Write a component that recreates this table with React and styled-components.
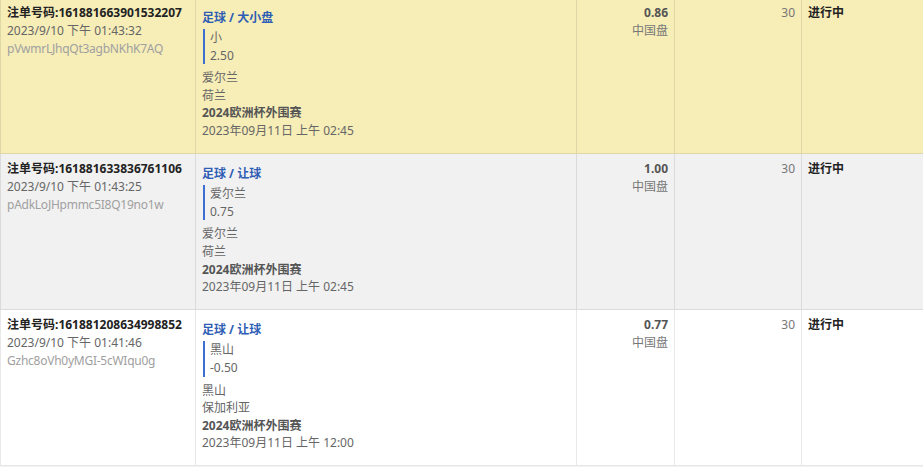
import styled, { createGlobalStyle } from "styled-components";

const bets = [
  {
    id: "161881663901532207",
    placed: "2023/9/10 下午 01:43:32",
    hash: "pVwmrLJhqQt3agbNKhK7AQ",
    market: "足球 / 大小盘",
    pick: "小",
    line: "2.50",
    home: "爱尔兰",
    away: "荷兰",
    league: "2024欧洲杯外围赛",
    kickoff: "2023年09月11日 上午 02:45",
    odds: "0.86",
    oddsType: "中国盘",
    stake: "30",
    status: "进行中",
    tone: "highlight",
  },
  {
    id: "161881633836761106",
    placed: "2023/9/10 下午 01:43:25",
    hash: "pAdkLoJHpmmc5I8Q19no1w",
    market: "足球 / 让球",
    pick: "爱尔兰",
    line: "0.75",
    home: "爱尔兰",
    away: "荷兰",
    league: "2024欧洲杯外围赛",
    kickoff: "2023年09月11日 上午 02:45",
    odds: "1.00",
    oddsType: "中国盘",
    stake: "30",
    status: "进行中",
    tone: "gray",
  },
  {
    id: "161881208634998852",
    placed: "2023/9/10 下午 01:41:46",
    hash: "Gzhc8oVh0yMGI-5cWIqu0g",
    market: "足球 / 让球",
    pick: "黑山",
    line: "-0.50",
    home: "黑山",
    away: "保加利亚",
    league: "2024欧洲杯外围赛",
    kickoff: "2023年09月11日 上午 12:00",
    odds: "0.77",
    oddsType: "中国盘",
    stake: "30",
    status: "进行中",
    tone: "white",
  },
];

const tones = {
  highlight: "#f6edb7",
  gray: "#f1f1f1",
  white: "#ffffff",
};

export default function App() {
  return (
    <>
      <GlobalStyle />
      <Table>
        {bets.map((b) => (
          <Row key={b.id} $tone={b.tone}>
            <Cell>
              <Strong>注单号码:{b.id}</Strong>
              <Muted>{b.placed}</Muted>
              <Faint>{b.hash}</Faint>
            </Cell>
            <DetailCell>
              <Market>{b.market}</Market>
              <Pick>
                <div>{b.pick}</div>
                <div>{b.line}</div>
              </Pick>
              <Muted>{b.home}</Muted>
              <Muted>{b.away}</Muted>
              <League>{b.league}</League>
              <Muted>{b.kickoff}</Muted>
            </DetailCell>
            <Cell $align="right">
              <Odds>{b.odds}</Odds>
              <OddsType>{b.oddsType}</OddsType>
            </Cell>
            <Cell $align="right">
              <Stake>{b.stake}</Stake>
            </Cell>
            <Cell>
              <Strong>{b.status}</Strong>
            </Cell>
          </Row>
        ))}
        <Row $tone="gray" $filler />
      </Table>
    </>
  );
}

const GlobalStyle = createGlobalStyle`
  html, body {
    margin: 0;
    padding: 0;
    background: #fff;
    overflow: hidden;
  }
  body {
    font-family: "Noto Sans", "Noto Sans CJK SC", sans-serif;
    font-size: 12px;
  }
`;

const Table = styled.div`
  width: 923px;
  margin-top: -2px;
`;

const Row = styled.div`
  display: grid;
  grid-template-columns: 195px 381px 98px 127px 1fr;
  background: ${(p) => tones[p.$tone]};
  border-bottom: 1px solid rgba(0, 0, 0, 0.09);
  min-height: ${(p) => (p.$filler ? "30px" : "auto")};
`;

const Cell = styled.div`
  border-left: 1px solid rgba(0, 0, 0, 0.09);
  padding: 6px 6px 0 6px;
  line-height: 18px;
  text-align: ${(p) => p.$align || "left"};
`;

const DetailCell = styled(Cell)`
  padding: 11px 6px 13.6px 6px;
  line-height: 17.6px;
`;

const Strong = styled.div`
  font-weight: bold;
  color: #222;
  line-height: 18px;
`;

const Muted = styled.div`
  color: #666;
`;

const Faint = styled.div`
  color: #a0a0a0;
  letter-spacing: -0.25px;
`;

const Market = styled.div`
  color: #2d5db4;
  font-weight: bold;
  line-height: 18px;
`;

const Pick = styled.div`
  margin: 2px 0 5px 1px;
  padding-left: 5px;
  border-left: 2px solid #3d6fd2;
  color: #666;
`;

const League = styled.div`
  color: #555;
  font-weight: bold;
`;

const Odds = styled.div`
  color: #555;
  font-weight: bold;
`;

const OddsType = styled.div`
  color: #777;
`;

const Stake = styled.div`
  color: #777;
`;
